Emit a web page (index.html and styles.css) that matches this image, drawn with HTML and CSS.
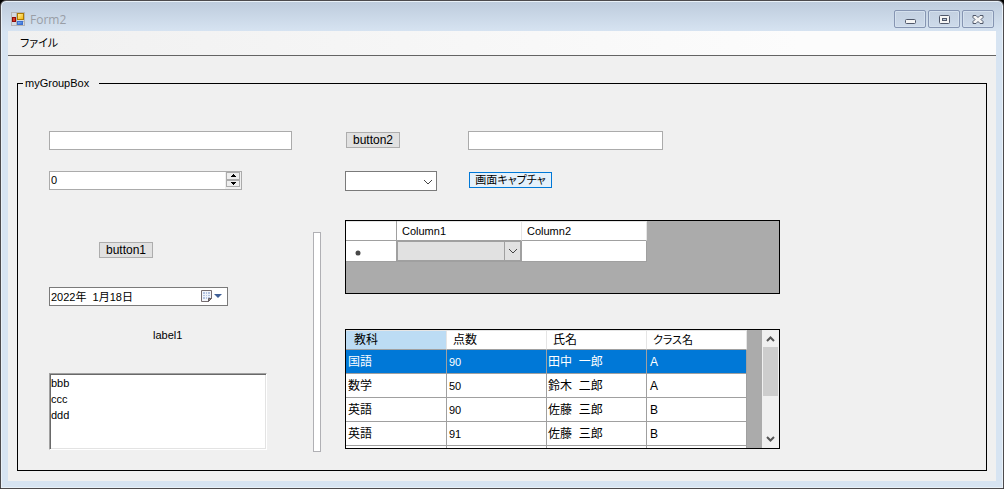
FILE: index.html
```html
<!DOCTYPE html>
<html lang="ja">
<head>
<meta charset="utf-8">
<title>Form2</title>
<link rel="stylesheet" href="styles.css">
</head>
<body>
<div class="window">
  <header class="titlebar">
    <svg class="app-icon" width="15" height="15" viewBox="0 0 15 15" shape-rendering="crispEdges" aria-hidden="true">
      <defs>
        <linearGradient id="gold" x2="1" y2="1"><stop stop-color="#fff3a8"/><stop offset="1" stop-color="#f2b300"/></linearGradient>
        <linearGradient id="sky" x2="1" y2="1"><stop stop-color="#8fc0f8"/><stop offset="1" stop-color="#2864d0"/></linearGradient>
      </defs>
      <path d="M.5.5h13v13H.5zM5.500 0v14M0 9.500h14" fill="#d3dae2" stroke="#b4b4b4"/>
      <rect x="6.500" y="1.500" width="6" height="6" fill="url(#gold)" stroke="#ad7a00"/>
      <rect x="1.500" y="5.500" width="3" height="4" fill="#d83a20" stroke="#8f0c0c"/>
      <rect x="6.500" y="9.500" width="5" height="3" fill="url(#sky)" stroke="#3c70d0"/>
    </svg>
    <h1 class="title">Form2</h1>
    <div class="caption-buttons">
      <button class="caption" type="button" aria-label="最小化"><svg width="11" height="12" viewBox="0 0 11 12"><rect x=".5" y="6.500" width="10" height="4" rx="1" fill="#f5f5f5" stroke="#50586a"/></svg></button>
      <button class="caption" type="button" aria-label="最大化"><svg width="11" height="12" viewBox="0 0 11 12"><rect x=".5" y="2.500" width="10" height="8" rx="1" fill="#f5f5f5" stroke="#50586a"/><rect x="3.500" y="5.500" width="4" height="2" fill="#b8c7da" stroke="#50586a"/></svg></button>
      <button class="caption" type="button" aria-label="閉じる"><svg width="12" height="12" viewBox="0 0 12 12"><path d="M1 2.500h3l2 2 2-2h3v2L9 6.500l2 2v2H8l-2-2-2 2H1v-2l2-2-2-2z" fill="#f5f5f5" stroke="#50586a"/></svg></button>
    </div>
  </header>
  <main class="client">
    <nav class="menubar"><button class="menu" type="button">ファイル</button></nav>
    <fieldset class="group">
      <legend>myGroupBox</legend>
      <div class="content">
        <div class="fields">
          <input class="textbox wide" type="text" aria-label="テキスト1">
          <div class="line">
            <button class="btn" type="button">button2</button>
            <input class="textbox" type="text" aria-label="テキスト2">
          </div>
          <div class="numeric">
            <input type="text" inputmode="numeric" value="0" aria-label="数値">
            <div class="spin">
              <button type="button" aria-label="増やす"><svg width="5" height="3" shape-rendering="crispEdges"><path d="M2 0h1v1h1v1h1v1H0V2h1V1h1z"/></svg></button>
              <button type="button" aria-label="減らす"><svg width="5" height="3" shape-rendering="crispEdges"><path d="M0 0h5v1H4v1H3v1H2V2H1V1H0z"/></svg></button>
            </div>
          </div>
          <div class="line">
            <div class="combo">
              <select aria-label="選択"><option></option></select>
              <svg class="chevron" width="10" height="6" viewBox="0 0 10 6"><path d="M1 1l4 4 4-4"/></svg>
            </div>
            <button class="btn focused" type="button">画面キャプチャ</button>
          </div>
        </div>
        <div class="lower">
          <div class="left">
            <button class="btn" type="button">button1</button>
            <div class="date">
              <input type="text" value="2022年  1月18日" aria-label="日付">
              <button type="button" aria-label="カレンダー">
                <svg width="21" height="13" viewBox="0 0 21 13">
                  <path d="M.5.5h10v8l-3 3h-7z" fill="#f4f6fb" stroke="#766d70"/>
                  <path d="M2 2h7v7H2z" fill="#b3c2e0"/>
                  <path d="M2 4.500h7M2 6.500h7M4.500 2v7M6.500 2v7" stroke="#eef2fa" fill="none"/>
                  <path d="M7.500 11.500v-3h3z" fill="#8a8182" stroke="#665d60"/>
                  <path d="M13 4h8l-4 4z" fill="#3f5f96"/>
                </svg>
              </button>
            </div>
            <span class="label">label1</span>
            <select class="listbox" size="4" aria-label="リスト"><option>bbb</option><option>ccc</option><option>ddd</option></select>
          </div>
          <div class="panel"></div>
          <div class="right">
            <div class="grid entry">
              <table>
                <thead><tr><th class="rowhead"></th><th>Column1</th><th>Column2</th></tr></thead>
                <tbody><tr>
                  <td class="rowhead"><svg width="6" height="6"><circle cx="3" cy="3" r="2.500" fill="#484848"/></svg></td>
                  <td class="choice"><div class="combo flat"><select aria-label="Column1"><option></option></select><svg class="chevron" width="10" height="6" viewBox="0 0 10 6"><path d="M1 1l4 4 4-4"/></svg></div></td>
                  <td></td>
                </tr></tbody>
              </table>
            </div>
            <div class="grid scores">
              <table>
                <thead><tr><th class="current">教科</th><th>点数</th><th>氏名</th><th class="kana">クラス名</th></tr></thead>
                <tbody>
                  <tr class="selected"><td>国語</td><td>90</td><td>田中  一郎</td><td>A</td></tr>
                  <tr><td>数学</td><td>50</td><td>鈴木  二郎</td><td>A</td></tr>
                  <tr><td>英語</td><td>90</td><td>佐藤  三郎</td><td>B</td></tr>
                  <tr><td>英語</td><td>91</td><td>佐藤  三郎</td><td>B</td></tr>
                  <tr><td></td><td></td><td></td><td></td></tr>
                </tbody>
              </table>
              <div class="scrollbar">
                <svg width="9" height="6" viewBox="0 0 9 6"><path d="M1 5l3.500-3.500L8 5"/></svg>
                <div class="thumb"></div>
                <svg width="9" height="6" viewBox="0 0 9 6"><path d="M1 1l3.500 3.500L8 1"/></svg>
              </div>
            </div>
          </div>
        </div>
      </div>
    </fieldset>
  </main>
</div>
</body>
</html>
```
FILE: styles.css
```css
* { box-sizing: border-box; }
body { margin: 0; background: #000; }
body, button, input, select {
  font-family: "Liberation Sans", "Noto Sans CJK JP", sans-serif;
  font-size: 11px;
  color: #000;
}
button, input, select { margin: 0; padding: 0; border-radius: 0; outline: 0; }
svg { display: block; flex: none; }

.window {
  display: flex;
  flex-direction: column;
  min-height: 100vh;
  padding: 0 7px 7px;
  border: 1px solid #4c4a4d;
  border-radius: 6px 6px 0 0;
  background: linear-gradient(#bdcbdc, #d7e4f2 31px);
  box-shadow: inset 0 0 0 1px #e9f1f8;
}
.titlebar { display: flex; align-items: center; height: 30px; padding: 6px 2px 0 3px; }
.title {
  flex: 1;
  margin: 1px 0 0 4px;
  font: 12px/16px "Open Sans", sans-serif;
  color: #999ea6;
}
.caption-buttons { display: flex; gap: 2px; }
.caption {
  display: flex;
  align-items: center;
  justify-content: center;
  width: 32px;
  height: 18px;
  border: 1px solid #8695b2;
  border-radius: 2px;
  background: linear-gradient(#c3d0e0, #cddaea);
  box-shadow: inset 0 0 0 1px #d5e1ee;
}

.client { flex: 1; display: flex; flex-direction: column; background: #f0f0f0; }
.menubar {
  height: 25px;
  border-bottom: 1px solid #646464;
  background: linear-gradient(90deg, #f0f0f0, #fcfcfc 80%);
}
.menu {
  height: 22px;
  padding: 0 12px;
  border: 0;
  background: none;
  font-size: 11px;
  font-feature-settings: "palt";
}

.group {
  flex: 1;
  margin: 21px 9px 10px;
  padding: 0;
  border: 1px solid #000;
}
.group legend {
  margin-left: 5px;
  padding: 0 10px 0 2px;
  line-height: 13px;
}
.content { padding: 41px 31px 18px; }
.fields {
  display: grid;
  grid-template-columns: 296px 1fr;
  grid-template-rows: 40px 49px;
  align-items: start;
}
.line { display: flex; }
.textbox { width: 195px; height: 19px; border: 1px solid #ababab; background: #fff; }
.textbox.wide { width: 243px; }
.btn {
  height: 16px;
  width: 54px;
  padding-top: 1px;
  border: 1px solid #adadad;
  background: #e1e1e1;
  font-size: 12px;
  line-height: 13px;
  white-space: nowrap;
}
.line .btn { margin: 1px 0 0 1px; }
.line .textbox { margin-left: 68px; }
.btn.focused {
  width: 83px;
  border-color: #0078d7;
  background: #e5f1fb;
  font-size: 11px;
  font-feature-settings: "palt";
}
.line .btn.focused { margin-left: 32px; }

.numeric {
  display: flex;
  width: 193px;
  height: 19px;
  border: 1px solid #ababab;
  background: #fff;
}
.numeric input { flex: 1; min-width: 0; height: 16px; padding: 0 1px; border: 0; background: none; }
.spin { display: flex; flex-direction: column; width: 16px; padding: 0 1px 2px; background: #f0f0f0; }
.spin button {
  flex: 1;
  display: flex;
  align-items: center;
  justify-content: center;
  border: 1px solid #ababab;
  background: #eee;
}

.combo { position: relative; width: 92px; height: 20px; }
.combo select {
  display: block;
  width: 100%;
  height: 100%;
  appearance: none;
  border: 1px solid #7a7a7a;
  background: #fff;
}
.chevron { position: absolute; right: 4px; top: 8px; pointer-events: none; }
.chevron path { fill: none; stroke: #444; }

.lower { display: flex; }
.left { display: flex; flex-direction: column; align-items: flex-start; width: 264px; padding-top: 22px; }
.left .btn { margin-left: 50px; }
.date {
  display: flex;
  width: 179px;
  height: 19px;
  margin-top: 29px;
  border: 1px solid #7a7a7a;
  background: #fff;
}
.date input { flex: 1; min-width: 0; height: 16px; padding: 0 1px; border: 0; background: none; white-space: pre; }
.date button { padding: 0 5px 0 0; border: 0; background: none; }
.label { margin: 23px 0 0 104px; line-height: 13px; }
.listbox {
  width: 218px;
  height: 77px;
  margin-top: 31px;
  padding: 3px 1px;
  overflow: hidden;
  border: 1px solid;
  border-color: #a0a0a0 #fff #fff #a0a0a0;
  background: #fff;
  box-shadow: inset 1px 1px #696969, inset -1px -1px #e3e3e3;
}
.listbox option { height: 16px; min-height: 16px; padding: 0; line-height: 16px; }
.panel { width: 8px; height: 220px; margin: 12px 24px 0 0; border: 1px solid #b0b0b4; background: #fff; }
.right { display: flex; flex-direction: column; gap: 35px; }

.grid {
  display: flex;
  justify-content: space-between;
  align-items: flex-start;
  width: 435px;
  overflow: hidden;
  border: 1px solid #000;
  background: #ababab;
}
.entry { height: 74px; }
.scores { height: 120px; }
table { width: 401px; table-layout: fixed; border-collapse: separate; border-spacing: 0; }
.entry table { width: 301px; }
th, td {
  padding: 0 1px;
  border-right: 1px solid #a0a0a0;
  border-bottom: 1px solid #a0a0a0;
  background: #fff;
  text-align: left;
  font-weight: normal;
  white-space: pre;
}
th { height: 20px; padding: 0 5px; border-right-color: #e5e5e5; line-height: 18px; box-shadow: inset 0 1px #e5e5e5; }
.rowhead { width: 51px; border-right-color: #a0a0a0; }
td.rowhead { padding: 3px 0 0 9px; }
.entry td { height: 21px; }
.entry .choice { padding: 0; }
.combo.flat { width: 100%; }
.flat select { border: 1px solid #a0a0a0; background: #e1e1e1; }
.flat .chevron { top: 7px; right: 3px; }
.flat::after {
  content: "";
  position: absolute;
  top: 0;
  right: 16px;
  height: 100%;
  border-left: 1px solid #a0a0a0;
}
.scores td { height: 24px; padding-top: 1px; line-height: 22px; font-size: 12px; }
.scores th { font-size: 12px; padding-left: 6px; }
.scores th.kana { font-size: 11px; font-feature-settings: "palt"; }
.scores th.current { width: 101px; padding-left: 8px; background: #bcdcf4; }
.scores td:first-child { padding-left: 2px; }
.scores td:nth-child(2) { font-size: 11px; padding-left: 2px; }
.scores td:last-child { padding-left: 3px; }
.scores .selected td { background: #0078d7; color: #fff; }
.scrollbar {
  display: flex;
  flex-direction: column;
  align-items: center;
  width: 17px;
  height: 118px;
  padding: 6px 0;
  background: #f0f0f0;
}
.scrollbar path { fill: none; stroke: #555; stroke-width: 2; }
.thumb { width: 15px; height: 49px; margin: 5px 0 auto; background: #cdcdcd; }
```
